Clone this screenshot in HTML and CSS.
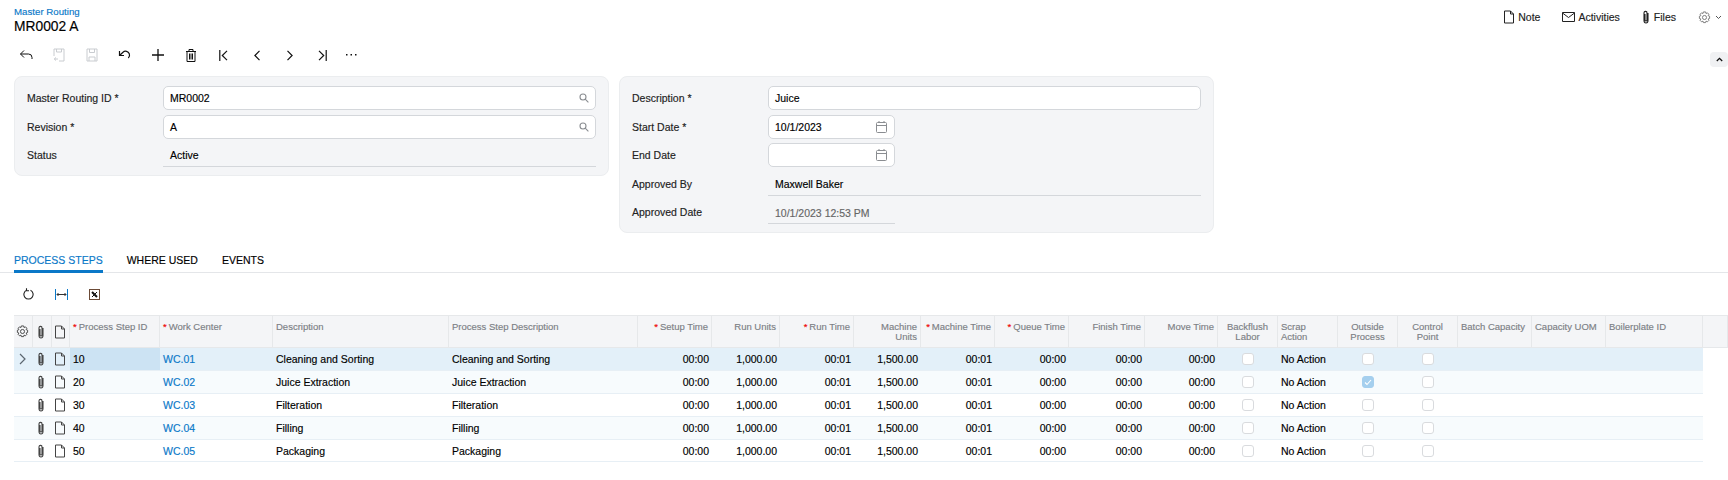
FILE: index.html
```html
<!DOCTYPE html>
<html lang="en">
<head>
    <meta charset="UTF-8">
    <meta name="viewport" content="width=device-width, initial-scale=1.0">
    <title>MR0002 A - Master Routing</title>
    <link rel="stylesheet" href="styles.css">
</head>
<body>
    <svg class="sprites" width="0" height="0">
        <symbol id="i-file" viewBox="0 0 12 14"><path d="M1.500 1h6l3 3v9h-9z M7.500 1v3h3" fill="none" stroke="currentColor"/></symbol>
        <symbol id="i-clip" viewBox="0 0 8 14"><path d="M3 4v6a1 1 0 0 0 2 0V3a1.500 1.500 0 0 0-3-.2V10.500a2 2.500 0 0 0 4 0V3" fill="none" stroke="currentColor" stroke-width="1.100"/></symbol>
        <symbol id="i-gear" viewBox="0 0 14 14"><g fill="none" stroke="currentColor"><path d="M5.800 1h2.400l.4 1.700 1.600-.7 1.500 1.500-.8 1.500 1.600.6v2.400l-1.600.6.800 1.500-1.500 1.500-1.600-.7-.4 1.600H5.800l-.4-1.600-1.600.7-1.500-1.500.8-1.500-1.600-.6V5.600l1.600-.6-.8-1.500L3.800 2l1.600.7z"/><circle cx="7" cy="7" r="2.200"/></g></symbol>
        <symbol id="i-search" viewBox="0 0 10 10"><g fill="none" stroke="currentColor" stroke-width="1.100"><circle cx="4" cy="4" r="3"/><path d="M6.200 6.200L9.400 9.400"/></g></symbol>
        <symbol id="i-cal" viewBox="0 0 11 12"><g fill="none" stroke="currentColor"><rect x=".5" y="1.500" width="10" height="10" rx="1"/><path d="M.5 4.500h10M3 0v2M8 0v2"/></g></symbol>
    </svg>

    <header class="page-head">
        <div>
            <a class="crumb">Master Routing</a>
            <h1>MR0002 A</h1>
        </div>
        <nav class="head-links">
            <span class="head-link"><svg width="12" height="14"><use href="#i-file"/></svg>Note</span>
            <span class="head-link"><svg width="13" height="10" viewBox="0 0 13 10"><path d="M.5.5h12v9H.5z M.5 1l6 4.500 6-4.500" fill="none" stroke="currentColor"/></svg>Activities</span>
            <span class="head-link clip"><svg width="8" height="14"><use href="#i-clip"/></svg>Files</span>
            <span class="head-gear">
                <svg class="gear" width="13" height="13"><use href="#i-gear"/></svg>
                <svg width="7" height="5" viewBox="0 0 7 5"><path d="M1 1l2.500 2.500L6 1" fill="none" stroke="currentColor"/></svg>
            </span>
        </nav>
    </header>

    <div class="toolbar">
        <button><svg width="14" height="12" viewBox="0 0 14 12"><path d="M5 1.500L1.500 5 5 8.500M1.500 5h8a3.500 3.500 0 0 1 3.500 3.500V10" fill="none" stroke="currentColor"/></svg></button>
        <button class="off"><svg width="12" height="14" viewBox="0 0 12 14"><path d="M1 8V1h10v12H6M3.500 1v3h5V1M1.500 11h3.500M3 9.500L1.200 11 3 12.500" fill="none" stroke="currentColor"/></svg></button>
        <button class="off"><svg width="12" height="14" viewBox="0 0 12 14"><path d="M1 1h10v12H1zM3.500 1v3.500h5V1M3 13V9h6v4" fill="none" stroke="currentColor"/></svg></button>
        <button><svg width="13" height="12" viewBox="0 0 13 12"><path d="M1.500 2v4.500H6M1.800 6.300L5 3.200a4 4 0 0 1 6.300 1.500 4 4 0 0 1-1 4.300" fill="none" stroke="currentColor" stroke-width="1.200"/></svg></button>
        <button><svg width="12" height="12" viewBox="0 0 12 12"><path d="M6 0v12M0 6h12" fill="none" stroke="currentColor" stroke-width="1.300"/></svg></button>
        <button><svg width="10" height="13" viewBox="0 0 10 13"><path d="M0 2.500h10M3 2.500V.5h4v2M1 2.500h8v10H1zM3.500 4.500v6M5 4.500v6M6.500 4.500v6" fill="none" stroke="currentColor"/></svg></button>
        <button><svg width="9" height="11" viewBox="0 0 9 11"><path d="M.8 0v11M8 .8L3.300 5.500 8 10.200" fill="none" stroke="currentColor" stroke-width="1.200"/></svg></button>
        <button><svg width="6" height="11" viewBox="0 0 6 11"><path d="M5.500.8L.9 5.500l4.600 4.700" fill="none" stroke="currentColor" stroke-width="1.200"/></svg></button>
        <button><svg width="6" height="11" viewBox="0 0 6 11"><path d="M.5.8l4.600 4.700L.5 10.200" fill="none" stroke="currentColor" stroke-width="1.200"/></svg></button>
        <button><svg width="9" height="11" viewBox="0 0 9 11"><path d="M8.200 0v11M1 .8l4.700 4.700L1 10.200" fill="none" stroke="currentColor" stroke-width="1.200"/></svg></button>
        <button class="more"><svg width="11" height="2" viewBox="0 0 11 2"><path d="M0 0h1.500v1.500H0zM4.500 0H6v1.500H4.500zM9 0h1.500v1.500H9z" fill="currentColor"/></svg></button>
        <button class="collapse"><svg width="7" height="5" viewBox="0 0 7 5"><path d="M.8 4l2.700-2.700L6.200 4" fill="none" stroke="currentColor" stroke-width="1.300"/></svg></button>
    </div>

    <section class="form-area">
        <div class="card">
            <label>Master Routing ID *</label>
            <div class="input"><span>MR0002</span><svg width="10" height="10"><use href="#i-search"/></svg></div>
            <label>Revision *</label>
            <div class="input"><span>A</span><svg width="10" height="10"><use href="#i-search"/></svg></div>
            <label>Status</label>
            <div class="readonly">Active</div>
        </div>
        <div class="card">
            <label>Description *</label>
            <div class="input"><span>Juice</span></div>
            <label>Start Date *</label>
            <div class="input short"><span>10/1/2023</span><svg width="11" height="12"><use href="#i-cal"/></svg></div>
            <label>End Date</label>
            <div class="input short"><span></span><svg width="11" height="12"><use href="#i-cal"/></svg></div>
            <label>Approved By</label>
            <div class="readonly">Maxwell Baker</div>
            <label>Approved Date</label>
            <div class="readonly short muted">10/1/2023 12:53 PM</div>
        </div>
    </section>

    <nav class="tabs">
        <a class="tab active">PROCESS STEPS</a>
        <a class="tab">WHERE USED</a>
        <a class="tab">EVENTS</a>
    </nav>

    <div class="grid-tools">
        <button><svg width="11" height="12" viewBox="0 0 11 12"><path d="M3.500 2.300A4.600 4.600 0 1 0 7.500 2.300M3.500.3v2.500H6" fill="none" stroke="#222" stroke-width="1.100"/></svg></button>
        <button><svg width="13" height="11" viewBox="0 0 13 11"><path d="M.5 0v11M12.500 0v11" stroke="#0a78c8" fill="none"/><path d="M2 5.500h9M3.500 4l-1.500 1.500L3.500 7M9.500 4L11 5.500 9.500 7" stroke="#333" fill="none"/></svg></button>
        <button><svg width="11" height="11" viewBox="0 0 11 11"><rect x=".5" y=".5" width="10" height="10" fill="#fff" stroke="#6b4a36"/><path d="M3 3l5 5" stroke="#111" stroke-width="2"/><path d="M8 3L3 8" stroke="#111"/></svg></button>
    </div>

    <table class="grid">
        <colgroup>
            <col class="w19"><col class="w19"><col class="w18"><col class="w90"><col class="w113"><col class="w176"><col class="w189">
            <col class="w74"><col class="w68"><col class="w74"><col class="w67"><col class="w74"><col class="w74"><col class="w76"><col class="w73">
            <col class="w60"><col class="w60"><col class="w60"><col class="w60"><col class="w74"><col class="w74"><col class="w97"><col class="w25">
        </colgroup>
        <thead>
            <tr>
                <th class="ico"><svg width="13" height="13"><use href="#i-gear"/></svg></th>
                <th class="ico"><svg width="8" height="14"><use href="#i-clip"/></svg></th>
                <th class="ico"><svg width="12" height="14"><use href="#i-file"/></svg></th>
                <th><i>*</i>Process Step ID</th>
                <th><i>*</i>Work Center</th>
                <th>Description</th>
                <th>Process Step Description</th>
                <th class="num"><i>*</i>Setup Time</th>
                <th class="num">Run Units</th>
                <th class="num"><i>*</i>Run Time</th>
                <th class="num">Machine Units</th>
                <th class="num"><i>*</i>Machine Time</th>
                <th class="num"><i>*</i>Queue Time</th>
                <th class="num">Finish Time</th>
                <th class="num">Move Time</th>
                <th class="mid">Backflush Labor</th>
                <th>Scrap Action</th>
                <th class="mid">Outside Process</th>
                <th class="mid">Control Point</th>
                <th>Batch Capacity</th>
                <th>Capacity UOM</th>
                <th>Boilerplate ID</th>
                <th></th>
            </tr>
        </thead>
        <tbody>
            <tr class="selected">
                <td class="ico arrow"><svg width="7" height="12" viewBox="0 0 7 12"><path d="M1 1l5 5-5 5" fill="none" stroke="currentColor" stroke-width="1.200"/></svg></td>
                <td class="ico"><svg width="8" height="14"><use href="#i-clip"/></svg></td>
                <td class="ico"><svg width="12" height="14"><use href="#i-file"/></svg></td>
                <td class="current">10</td><td class="link">WC.01</td><td>Cleaning and Sorting</td><td>Cleaning and Sorting</td>
                <td class="num">00:00</td><td class="num">1,000.00</td><td class="num">00:01</td><td class="num">1,500.00</td><td class="num">00:01</td><td class="num">00:00</td><td class="num">00:00</td><td class="num">00:00</td>
                <td class="mid"><span class="check"></span></td><td>No Action</td><td class="mid"><span class="check"></span></td><td class="mid"><span class="check"></span></td><td></td><td></td><td></td>
            </tr>
            <tr class="alt">
                <td class="ico"></td>
                <td class="ico"><svg width="8" height="14"><use href="#i-clip"/></svg></td>
                <td class="ico"><svg width="12" height="14"><use href="#i-file"/></svg></td>
                <td>20</td><td class="link">WC.02</td><td>Juice Extraction</td><td>Juice Extraction</td>
                <td class="num">00:00</td><td class="num">1,000.00</td><td class="num">00:01</td><td class="num">1,500.00</td><td class="num">00:01</td><td class="num">00:00</td><td class="num">00:00</td><td class="num">00:00</td>
                <td class="mid"><span class="check"></span></td><td>No Action</td><td class="mid"><span class="check on"><svg width="8" height="7" viewBox="0 0 8 7"><path d="M1 3.500l2 2L7 1" fill="none" stroke="#fff" stroke-width="1.100"/></svg></span></td><td class="mid"><span class="check"></span></td><td></td><td></td><td></td>
            </tr>
            <tr>
                <td class="ico"></td>
                <td class="ico"><svg width="8" height="14"><use href="#i-clip"/></svg></td>
                <td class="ico"><svg width="12" height="14"><use href="#i-file"/></svg></td>
                <td>30</td><td class="link">WC.03</td><td>Filteration</td><td>Filteration</td>
                <td class="num">00:00</td><td class="num">1,000.00</td><td class="num">00:01</td><td class="num">1,500.00</td><td class="num">00:01</td><td class="num">00:00</td><td class="num">00:00</td><td class="num">00:00</td>
                <td class="mid"><span class="check"></span></td><td>No Action</td><td class="mid"><span class="check"></span></td><td class="mid"><span class="check"></span></td><td></td><td></td><td></td>
            </tr>
            <tr class="alt">
                <td class="ico"></td>
                <td class="ico"><svg width="8" height="14"><use href="#i-clip"/></svg></td>
                <td class="ico"><svg width="12" height="14"><use href="#i-file"/></svg></td>
                <td>40</td><td class="link">WC.04</td><td>Filling</td><td>Filling</td>
                <td class="num">00:00</td><td class="num">1,000.00</td><td class="num">00:01</td><td class="num">1,500.00</td><td class="num">00:01</td><td class="num">00:00</td><td class="num">00:00</td><td class="num">00:00</td>
                <td class="mid"><span class="check"></span></td><td>No Action</td><td class="mid"><span class="check"></span></td><td class="mid"><span class="check"></span></td><td></td><td></td><td></td>
            </tr>
            <tr>
                <td class="ico"></td>
                <td class="ico"><svg width="8" height="14"><use href="#i-clip"/></svg></td>
                <td class="ico"><svg width="12" height="14"><use href="#i-file"/></svg></td>
                <td>50</td><td class="link">WC.05</td><td>Packaging</td><td>Packaging</td>
                <td class="num">00:00</td><td class="num">1,000.00</td><td class="num">00:01</td><td class="num">1,500.00</td><td class="num">00:01</td><td class="num">00:00</td><td class="num">00:00</td><td class="num">00:00</td>
                <td class="mid"><span class="check"></span></td><td>No Action</td><td class="mid"><span class="check"></span></td><td class="mid"><span class="check"></span></td><td></td><td></td><td></td>
            </tr>
        </tbody>
    </table>
</body>
</html>
```

FILE: styles.css
```css
body {
    font-family: "Liberation Sans", Arial, sans-serif;
    font-size: 10.5px;
    margin: 0;
    padding: 0;
    background-color: #fff;
    color: #000;
    overflow: hidden;
    -webkit-text-stroke: 0.15px;
}
.sprites {
    display: block;
    height: 0;
}
svg {
    display: block;
}

/* page header */
.page-head {
    display: flex;
    justify-content: space-between;
    height: 36px;
    padding: 6px 6px 0 14px;
    box-sizing: border-box;
}
.crumb {
    display: block;
    color: #0a78c8;
    font-size: 9.7px;
    line-height: 11px;
}
h1 {
    margin: 1px 0 0;
    font-size: 13.8px;
    font-weight: normal;
    line-height: 17px;
}
.head-links {
    display: flex;
    align-items: center;
    height: 22px;
    color: #222;
}
.head-link {
    display: flex;
    align-items: center;
    gap: 3px;
    margin-right: 22px;
}
.head-link.clip {
    gap: 4px;
}
.head-gear {
    display: flex;
    align-items: center;
    gap: 4px;
    color: #555;
}
.gear {
    color: #777;
}

/* toolbars */
button {
    display: flex;
    align-items: center;
    justify-content: center;
    background: none;
    border: none;
    padding: 0;
    color: #111;
}
.toolbar {
    display: flex;
    align-items: center;
    height: 24px;
    margin-top: 7px;
    padding-left: 9px;
}
.toolbar button {
    width: 33px;
    height: 24px;
}
.toolbar .off {
    color: #c9ccd0;
}
.toolbar .more {
    width: 26px;
    margin-left: -1px;
}
.toolbar .collapse {
    align-self: flex-end;
    width: 18px;
    height: 15px;
    margin-left: auto;
    background: #f0f1f3;
    border-radius: 4px;
}

/* form */
.form-area {
    display: flex;
    align-items: flex-start;
    gap: 10px;
    margin-top: 9px;
    padding-left: 14px;
}
.card {
    display: grid;
    grid-template-columns: 136px 433px;
    grid-auto-rows: 24px;
    gap: 4.5px 0;
    align-items: center;
    width: 595px;
    padding: 9px 12px 8px 12px;
    box-sizing: border-box;
    background: #f4f5f7;
    border: 1px solid #ebedef;
    border-radius: 8px;
}
.card label {
    color: #222;
}
.input {
    display: flex;
    align-items: center;
    justify-content: space-between;
    height: 24px;
    padding: 0 6px 0 6px;
    box-sizing: border-box;
    background: #fff;
    border: 1px solid #d4d7db;
    border-radius: 5px;
    color: #8a8d91;
}
.input span {
    color: #000;
}
.short {
    width: 127px;
    padding-right: 7px;
}
.readonly {
    height: 24px;
    line-height: 24px;
    padding-left: 7px;
    box-sizing: border-box;
    border-bottom: 1px solid #d4d7db;
}
.muted {
    color: #666;
    line-height: 26px;
}

/* tabs */
.tabs {
    display: flex;
    gap: 24px;
    height: 24px;
    margin-top: 16px;
    padding-left: 14px;
    box-sizing: border-box;
    border-bottom: 1px solid #e4e6e9;
}
.tab {
    height: 24px;
    line-height: 22px;
    box-sizing: border-box;
}
.tab.active {
    color: #0a78c8;
    border-bottom: 3px solid #0a78c8;
}
.grid-tools {
    display: flex;
    height: 22px;
    margin-top: 10px;
    padding-left: 12px;
}
.grid-tools button {
    width: 33px;
}

/* grid */
.grid {
    width: 1714px;
    margin: 10px 0 0 14px;
    table-layout: fixed;
    border-collapse: separate;
    border-spacing: 0;
}
.w18 { width: 18px; }
.w19 { width: 19px; }
.w25 { width: 25px; }
.w60 { width: 60px; }
.w67 { width: 67px; }
.w68 { width: 68px; }
.w73 { width: 73px; }
.w74 { width: 74px; }
.w76 { width: 76px; }
.w90 { width: 90px; }
.w97 { width: 97px; }
.w113 { width: 113px; }
.w176 { width: 176px; }
.w189 { width: 189px; }
.grid th {
    height: 33px;
    padding: 6px 3px 0 3px;
    box-sizing: border-box;
    vertical-align: top;
    text-align: left;
    background: #f4f5f7;
    border-top: 1px solid #e6e8ea;
    border-bottom: 1px solid #e6e8ea;
    border-right: 1px solid #e6e8ea;
    color: #7c8085;
    font-size: 9.5px;
    font-weight: normal;
    line-height: 10px;
}
.grid th i {
    margin-right: 2px;
    color: #e00;
    font-style: normal;
}
.grid td {
    height: 23px;
    padding: 0 3px;
    box-sizing: border-box;
    background: #fff;
    border-bottom: 1px solid #e7eff5;
    white-space: nowrap;
}
.grid tbody tr:last-child td {
    height: 22px;
}
.grid .alt td {
    background: #f7fbfd;
}
.grid .selected td {
    background: #e3f0f9;
}
.grid .selected .current {
    background: #cce3f3;
}
.grid .num {
    text-align: right;
}
.grid .mid {
    text-align: center;
}
.grid .ico {
    padding: 0 3px 0 0;
    color: #444;
}
.grid th.ico {
    padding: 9px 2px 0 0;
}
.grid .ico svg {
    margin: 0 auto;
}
.grid .arrow {
    color: #5b6670;
}
.grid .link {
    color: #0a78c8;
}
.check {
    display: block;
    width: 12px;
    height: 12px;
    margin: 0 auto;
    box-sizing: border-box;
    background: #fff;
    border: 1px solid #d9dbde;
    border-radius: 3px;
}
.check.on {
    display: flex;
    align-items: center;
    justify-content: center;
    background: #a5cfee;
    border-color: #a5cfee;
}
```
